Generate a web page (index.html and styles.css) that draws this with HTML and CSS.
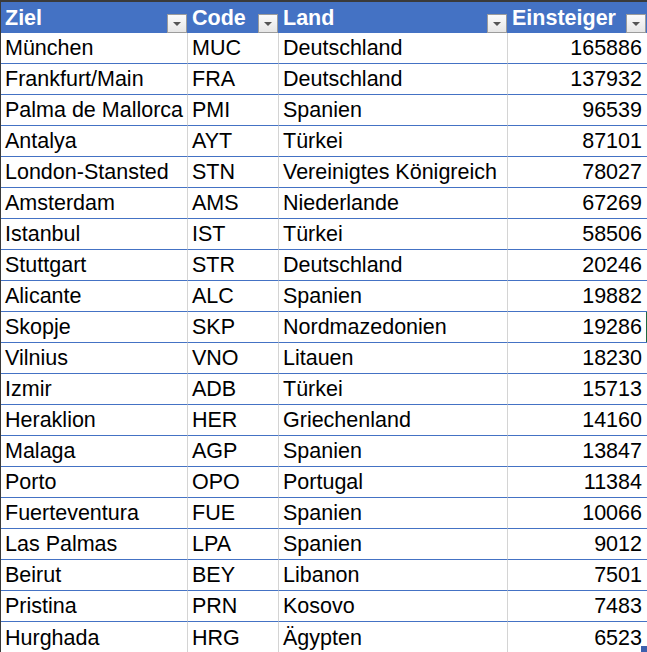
FILE: index.html
```html
<!DOCTYPE html>
<html lang="de">
<head>
<meta charset="utf-8">
<title>Ziele</title>
<link rel="stylesheet" href="styles.css">
</head>
<body>
<div class="sheet">
  <div class="row head">
    <div class="cell"><span class="label">Ziel</span><span class="filter"></span></div>
    <div class="cell"><span class="label">Code</span><span class="filter"></span></div>
    <div class="cell"><span class="label">Land</span><span class="filter"></span></div>
    <div class="cell"><span class="label">Einsteiger</span><span class="filter"></span></div>
  </div>
  <div class="row"><div class="cell">München</div><div class="cell">MUC</div><div class="cell">Deutschland</div><div class="cell num">165886</div></div>
  <div class="row"><div class="cell">Frankfurt/Main</div><div class="cell">FRA</div><div class="cell">Deutschland</div><div class="cell num">137932</div></div>
  <div class="row"><div class="cell">Palma de Mallorca</div><div class="cell">PMI</div><div class="cell">Spanien</div><div class="cell num">96539</div></div>
  <div class="row"><div class="cell">Antalya</div><div class="cell">AYT</div><div class="cell">Türkei</div><div class="cell num">87101</div></div>
  <div class="row"><div class="cell">London-Stansted</div><div class="cell">STN</div><div class="cell">Vereinigtes Königreich</div><div class="cell num">78027</div></div>
  <div class="row"><div class="cell">Amsterdam</div><div class="cell">AMS</div><div class="cell">Niederlande</div><div class="cell num">67269</div></div>
  <div class="row"><div class="cell">Istanbul</div><div class="cell">IST</div><div class="cell">Türkei</div><div class="cell num">58506</div></div>
  <div class="row"><div class="cell">Stuttgart</div><div class="cell">STR</div><div class="cell">Deutschland</div><div class="cell num">20246</div></div>
  <div class="row"><div class="cell">Alicante</div><div class="cell">ALC</div><div class="cell">Spanien</div><div class="cell num">19882</div></div>
  <div class="row"><div class="cell">Skopje</div><div class="cell">SKP</div><div class="cell">Nordmazedonien</div><div class="cell num sel">19286</div></div>
  <div class="row"><div class="cell">Vilnius</div><div class="cell">VNO</div><div class="cell">Litauen</div><div class="cell num">18230</div></div>
  <div class="row"><div class="cell">Izmir</div><div class="cell">ADB</div><div class="cell">Türkei</div><div class="cell num">15713</div></div>
  <div class="row"><div class="cell">Heraklion</div><div class="cell">HER</div><div class="cell">Griechenland</div><div class="cell num">14160</div></div>
  <div class="row"><div class="cell">Malaga</div><div class="cell">AGP</div><div class="cell">Spanien</div><div class="cell num">13847</div></div>
  <div class="row"><div class="cell">Porto</div><div class="cell">OPO</div><div class="cell">Portugal</div><div class="cell num">11384</div></div>
  <div class="row"><div class="cell">Fuerteventura</div><div class="cell">FUE</div><div class="cell">Spanien</div><div class="cell num">10066</div></div>
  <div class="row"><div class="cell">Las Palmas</div><div class="cell">LPA</div><div class="cell">Spanien</div><div class="cell num">9012</div></div>
  <div class="row"><div class="cell">Beirut</div><div class="cell">BEY</div><div class="cell">Libanon</div><div class="cell num">7501</div></div>
  <div class="row"><div class="cell">Pristina</div><div class="cell">PRN</div><div class="cell">Kosovo</div><div class="cell num">7483</div></div>
  <div class="row last"><div class="cell">Hurghada</div><div class="cell">HRG</div><div class="cell">Ägypten</div><div class="cell num">6523<span class="handle"></span></div></div>
</div>
</body>
</html>
```

FILE: styles.css
```css
html, body {
  margin: 0;
  padding: 0;
  background: #ffffff;
  overflow: hidden;
}

.sheet {
  width: 646px;
  border-top: 2px solid #3a3a3a;
  border-left: 1px solid #3a3a3a;
  font-family: "Liberation Sans", Arial, sans-serif;
  font-size: 21.5px;
  color: #000000;
}

.row {
  display: grid;
  grid-template-columns: 187px 91px 229px 139px;
  height: 31px;
}

.cell {
  position: relative;
  box-sizing: border-box;
  height: 31px;
  padding: 2px 4px 0 4px;
  display: flex;
  align-items: center;
  white-space: nowrap;
  border-right: 1px solid #d4d4d4;
  border-bottom: 1px solid #4472c4;
  line-height: 1;
}

.cell:last-child {
  border-right: none;
}

.num {
  justify-content: flex-end;
  padding-right: 5px;
}

.sel {
  box-shadow: inset -1px 0 0 #1e6b41;
}

.head {
  background: #4472c4;
}

.head .cell {
  border: none;
  color: #ffffff;
  font-weight: bold;
  justify-content: space-between;
  align-items: center;
  padding: 0 1px 0 4px;
}

.head .label {
  margin-top: 3px;
}

.filter {
  align-self: flex-end;
  box-sizing: border-box;
  width: 20px;
  height: 19px;
  border: 1px solid #9c9c9c;
  background: linear-gradient(#fbfbfb, #e6e6e6);
  display: flex;
  align-items: center;
  justify-content: center;
}

.filter::after {
  content: "";
  width: 0;
  height: 0;
  border-left: 4px solid transparent;
  border-right: 4px solid transparent;
  border-top: 4px solid #555555;
  margin-top: 1px;
}

.last .cell {
  border-bottom: none;
}

.handle {
  position: absolute;
  right: 0;
  bottom: 1px;
  width: 6px;
  height: 6px;
  background: #3d5fae;
}
```
